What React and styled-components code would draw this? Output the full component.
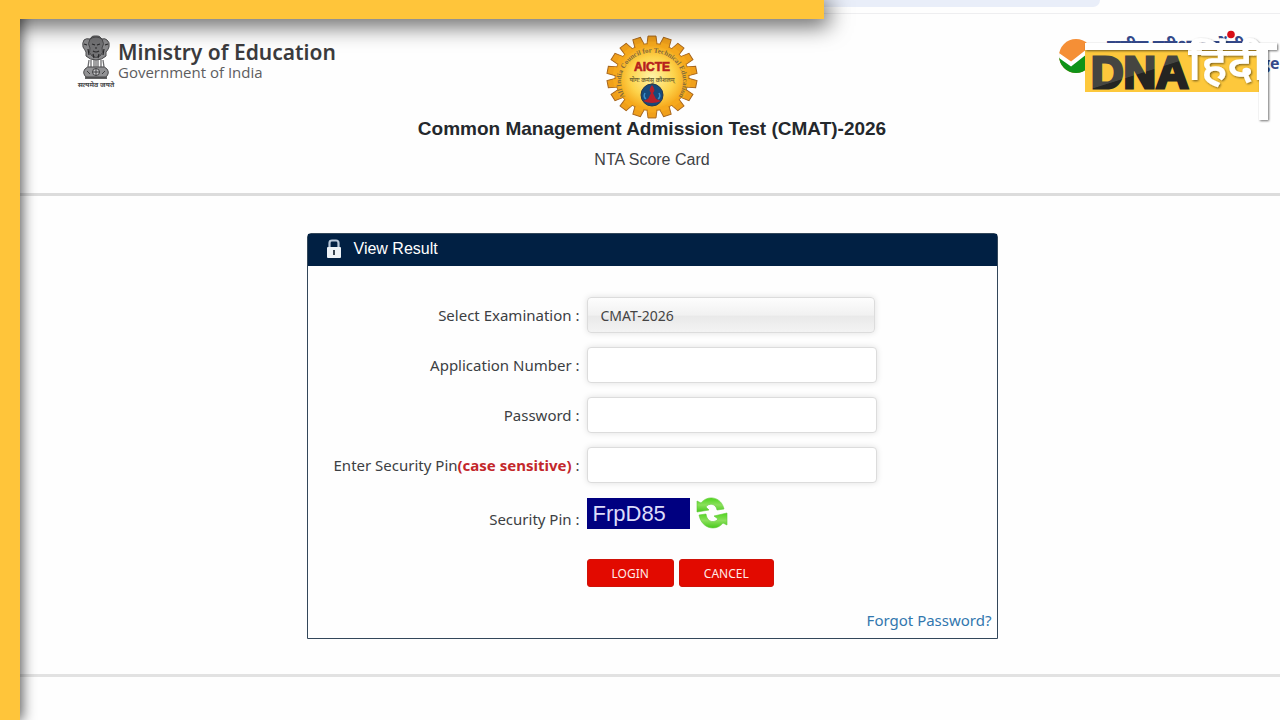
import React, { useState } from 'react';
import styled, { createGlobalStyle } from 'styled-components';

const GlobalStyle = createGlobalStyle`
  * {
    box-sizing: border-box;
  }

  body {
    margin: 0;
    background: #fefefe;
    color: #3c4043;
    font-family: 'Noto Sans', 'Open Sans', sans-serif;
    font-size: 15px;
    overflow-x: hidden;
  }
`;

const Page = styled.div`
  position: relative;
  min-height: 100vh;
  padding-left: 20px;
  overflow: hidden;
`;

/* yellow promo frame that lies over the page */
const FrameTop = styled.div`
  position: absolute;
  top: 0;
  left: 0;
  width: 824px;
  max-width: 100%;
  height: 19px;
  background: #ffc53a;
  box-shadow: 2px 4px 22px 3px rgba(0, 0, 0, 0.62);
`;

const FrameLeft = styled.div`
  position: absolute;
  top: 0;
  bottom: 0;
  left: 0;
  width: 20px;
  background: #ffc53a;
  box-shadow: 1px 0 14px 1px rgba(0, 0, 0, 0.68);
`;

const FrameCorner = styled.div`
  position: absolute;
  top: 0;
  left: 0;
  width: 60px;
  height: 19px;
  background: #ffc53a;
`;

const BrowserStrip = styled.div`
  height: 14px;
  padding-right: 180px;
  border-bottom: 1px solid #eeeef0;
`;

const AddressPill = styled.div`
  height: 7px;
  background: #e9eef9;
  border-radius: 0 0 14px 14px;
`;

const Header = styled.header`
  display: grid;
  grid-template-columns: 1fr auto 1fr;
  align-items: start;
  padding: 21px 0 22px 4px;
  border-bottom: 3px solid #dcdcdc;
`;

const Ministry = styled.div`
  display: flex;
  gap: 3px;
  padding-left: 53px;
`;

const MinistryText = styled.div`
  padding-top: 5px;
`;

const MinistryName = styled.div`
  color: #3b3b3d;
  font-size: 21px;
  font-weight: 600;
  line-height: 24px;
  white-space: nowrap;
`;

const MinistryGov = styled.div`
  color: #5d5d5f;
  font-family: 'Open Sans', sans-serif;
  font-size: 15px;
  line-height: 16px;
`;

const Center = styled.div`
  display: flex;
  flex-direction: column;
  align-items: center;
`;

const Title = styled.h1`
  margin: 0;
  color: #24282c;
  font-family: 'Liberation Sans', Arial, sans-serif;
  font-size: 19px;
  font-weight: 700;
  line-height: 20px;
  white-space: nowrap;
`;

const SubTitle = styled.h2`
  margin: 10px 0 0;
  color: #3f4245;
  font-family: 'Liberation Sans', Arial, sans-serif;
  font-size: 16px;
  font-weight: 400;
  line-height: 22px;
`;

const Brand = styled.div`
  position: absolute;
  top: 14px;
  right: 0;
`;

const Main = styled.main`
  padding: 37px 0 35px 4px;
  border-bottom: 3px solid #e2e2e2;
`;

const Panel = styled.section`
  width: 55%;
  min-width: 691px;
  margin: 0 auto;
  border: 1px solid #33475a;
  border-radius: 4px 4px 0 0;
`;

const PanelHead = styled.div`
  display: flex;
  align-items: center;
  gap: 12px;
  height: 32px;
  padding: 0 18px 2px;
  background: #012043;
  color: #fff;
  font-family: 'Liberation Sans', Arial, sans-serif;
  font-size: 16px;
`;

const Form = styled.form`
  display: grid;
  gap: 14px;
  padding: 31px 0 0;
`;

const Row = styled.div`
  display: grid;
  grid-template-columns: 272px 1fr;
  align-items: ${(p) => p.$align || 'center'};
  gap: 7px;
`;

const Label = styled.label`
  line-height: 20px;
  text-align: right;
  white-space: nowrap;

  b {
    color: #c3272b;
  }
`;

const fieldLook = `
  height: 36px;
  border: 1px solid #dcdcdc;
  border-radius: 4px;
  box-shadow: 0 0 6px rgba(0, 0, 0, 0.12);
  padding: 0 13px;
  color: #444;
  font-family: 'Noto Sans', sans-serif;
  font-size: 14px;
`;

const Field = styled.input`
  ${fieldLook}
  width: 290px;
  background: #fff;
`;

const Select = styled.select`
  ${fieldLook}
  width: 288px;
  appearance: none;
  background: linear-gradient(#fdfdfd 0%, #f1f1f1 50%, #e9e9e9 54%, #f3f3f3 100%);
`;

const Captcha = styled.div`
  display: flex;
  align-items: center;
  gap: 6px;
`;

const CaptchaCode = styled.output`
  width: 103px;
  height: 31px;
  padding-left: 6px;
  background: #000080;
  color: #dcdcfa;
  font-family: 'Liberation Sans', Arial, sans-serif;
  font-size: 22px;
  line-height: 31px;
`;

const IconButton = styled.button`
  display: flex;
  padding: 0;
  border: 0;
  background: none;
  cursor: pointer;
`;

const Actions = styled.div`
  display: flex;
  gap: 5px;
  padding: 16px 0 0 279px;
`;

const Button = styled.button`
  height: 28px;
  padding: 0 24px;
  border: 1px solid #d01208;
  border-radius: 3px;
  background: #e20a00;
  color: #ffe9e6;
  font-family: 'Noto Sans', sans-serif;
  font-size: 12px;
  cursor: pointer;
`;

const Forgot = styled.div`
  padding: 22px 5px 7px 0;
  line-height: 22px;
  text-align: right;

  a {
    color: #3277ae;
    text-decoration: none;
  }
`;

const Emblem = () => (
  <svg width="38" height="56" viewBox="0 0 38 56" aria-hidden="true">
    <g stroke="#4a4a4c" strokeWidth="1">
      <path d="M7 5 Q5 8 6 12 Q8 15 9 17 L9 21 Q13 25 19 25 Q25 25 29 21 L29 17 Q31 15 32 12 Q33 7 30 5 Q28 3 25 4 Q22 0 19 1 Q15 0 13 4 Q9 3 7 5Z" fill="#8b8b8d" />
      <path d="M13 4 Q10 9 13 13 Q11 18 15 21 Q19 24 23 21 Q27 18 25 13 Q28 9 25 4 Q19 0 13 4Z" fill="#737375" />
    </g>
    <path d="M15 9 L18 10 M20 10 L23 9 M18 13 H20 M16 16 Q19 18 22 16 M7 9 L10 10 M28 10 L31 9 M11 14 L12 20 M27 14 L26 20 M16 19 L17 23 M21 23 L22 19" stroke="#29292b" strokeWidth="1.2" fill="none" />
    <path d="M12 25 L11 32 M14 25 L14 33 M17 25 V33 M19 25 V34 M21 25 V33 M24 25 L24 33 M26 25 L27 32" stroke="#6c6c6e" strokeWidth="1.3" />
    <path d="M8 34 Q10 31 15 32 L23 32 Q28 31 30 34 Q33 38 29 42 L9 42 Q5 38 8 34Z" fill="#929294" stroke="#48484a" />
    <circle cx="19" cy="37" r="3.5" fill="#c8c8ca" stroke="#3d3d3f" />
    <path d="M19 34 V40 M16 37 H22 M10 36 L13 39 M25 39 L28 36" stroke="#404042" />
    <path d="M8 43 H30" stroke="#3b3b3d" strokeWidth="1.6" />
    <text x="19" y="52" textAnchor="middle" fontFamily="'Noto Sans', 'Noto Sans Devanagari', sans-serif" fontSize="7" fontWeight="700" fill="#48484a">सत्यमेव जयते</text>
  </svg>
);

const teeth = Array.from({ length: 18 }, (_, i) => i * 20);

const AicteLogo = () => (
  <svg width="92" height="84" viewBox="0 0 92 84" role="img" aria-label="AICTE">
    <defs>
      <radialGradient id="gear">
        <stop offset="0" stopColor="#fff3a8" />
        <stop offset="0.6" stopColor="#fdd34b" />
        <stop offset="1" stopColor="#f5a315" />
      </radialGradient>
      <path id="arc" d="M20.500 63 A31 29 0 1 1 71.500 63" />
    </defs>
    <g transform="translate(46 42) scale(1 0.91)">
      {teeth.map((a) => (
        <path key={a} d="M-5 -36 L-4 -45 H4 L5 -36Z" transform={`rotate(${a})`} fill="#f0a01b" stroke="#a7651c" />
      ))}
      <circle r="37" fill="url(#gear)" stroke="#b77720" />
      {teeth.map((a) => (
        <path key={a} d="M-4.200 -34 V-39 H4.200 V-34Z" transform={`rotate(${a})`} fill="#f6a91d" />
      ))}
    </g>
    <text fontFamily="'Liberation Serif', serif" fontSize="7" fontWeight="700" fill="#82693a">
      <textPath href="#arc" startOffset="50%" textAnchor="middle">All India Council for Technical Education</textPath>
    </text>
    <text x="46" y="36" textAnchor="middle" fontFamily="'Liberation Sans', sans-serif" fontSize="12" fontWeight="700" fill="#b5201c" stroke="#b5201c" strokeWidth="0.6">AICTE</text>
    <text x="46" y="47" textAnchor="middle" fontFamily="'Noto Sans', sans-serif" fontSize="6" fontWeight="600" fill="#6f642f">योगः कर्मसु कौशलम्</text>
    <circle cx="46" cy="60" r="11" fill="#164a7c" stroke="#26384e" />
    <path d="M46 50 Q42 55 45 58 L42 64 L37 66 Q46 70 55 66 L50 64 L47 58 Q50 55 46 50Z" fill="#b5202a" />
    <path d="M39 58 Q37 62 40 64 M53 58 Q55 62 52 64" stroke="#3c8ec9" strokeWidth="1.5" fill="none" />
  </svg>
);

const deva = "'Noto Sans', 'Noto Sans Devanagari', sans-serif";

const DnaLogo = () => (
  <svg width="224" height="116" viewBox="1056 14 224 116" role="img" aria-label="DNA हिंदी">
    <defs>
      <clipPath id="leaf">
        <ellipse cx="1076" cy="56" rx="17" ry="17" />
      </clipPath>
      <linearGradient id="ink" gradientUnits="userSpaceOnUse" x1="1130" y1="52" x2="1142" y2="90">
        <stop offset="0.58" stopColor="#454541" />
        <stop offset="0.6" stopColor="#242422" />
      </linearGradient>
      <filter id="lift" x="-10%" y="-10%" width="120%" height="130%">
        <feDropShadow dx="1" dy="1" stdDeviation="1.2" floodOpacity="0.55" />
      </filter>
    </defs>
    <text x="1107" y="52" fontFamily={deva} fontSize="18" fontWeight="700" fill="#34498a">राष्ट्रीय परीक्षा एजेंसी</text>
    <text x="1261" y="69" fontFamily="'Open Sans', sans-serif" fontSize="16" fontWeight="700" fill="#34498a">ge</text>
    <g clipPath="url(#leaf)">
      <rect x="1058" y="38" width="40" height="36" fill="#f58f36" />
      <path d="M1056 55 L1071 64 L1094 46 V76 H1056Z" fill="#0f9318" />
      <path d="M1057 54 L1071 64 L1094 46" stroke="#fff" strokeWidth="4" fill="none" />
    </g>
    <rect x="1085" y="50" width="174" height="42" fill="#fdc83c" />
    <text x="1091" y="88" fontFamily="'Liberation Sans', Arial, sans-serif" fontSize="45" fontWeight="700" fill="url(#ink)" stroke="url(#ink)" strokeWidth="3">DNA</text>
    <g filter="url(#lift)" fill="#fff">
      <rect x="1085" y="43" width="192" height="7" />
      <rect x="1259" y="44" width="9" height="76" />
      <text x="1188" y="80" fontFamily={deva} fontSize="47" fontWeight="600">हिंदी</text>
    </g>
    <circle cx="1231" cy="34.500" r="3.800" fill="#d80d17" />
  </svg>
);

const LockIcon = () => (
  <svg width="16" height="20" viewBox="0 0 16 20" aria-hidden="true">
    <path d="M3.500 9 V4 Q3.500 1.500 6 1.500 H10 Q12.500 1.500 12.500 4 V9" stroke="#b9c8da" strokeWidth="2.200" fill="none" />
    <rect x="1" y="8" width="14" height="11" rx="1" fill="#eef3f8" />
    <path d="M8 11 V16" stroke="#3a4652" strokeWidth="2" />
  </svg>
);

const RefreshIcon = () => (
  <svg width="32" height="32" viewBox="0 0 32 32" aria-hidden="true">
    <defs>
      <linearGradient id="leafGreen" x1="0" y1="0" x2="0" y2="1">
        <stop offset="0" stopColor="#4fd41e" />
        <stop offset="0.5" stopColor="#8be05c" />
        <stop offset="1" stopColor="#48c91c" />
      </linearGradient>
    </defs>
    <g fill="url(#leafGreen)" stroke="#5fc936" strokeWidth="0.6">
      <path d="M1 4 L5 6 C11 -2 25 -1 28 12 L21 13 C20 6 12 6 10 10 L13 13 L1 15Z" />
      <path d="M31 28 L27 26 C21 34 6 33 3 18 L10 17 C11 26 19 26 22 22 L18 19 L31 16Z" />
    </g>
  </svg>
);

const fields = [
  { id: 'appNo', label: 'Application Number :', type: 'text' },
  { id: 'password', label: 'Password :', type: 'password' },
  { id: 'pin', label: 'Enter Security Pin', note: '(case sensitive)', type: 'text' },
];

const App = () => {
  const [values, setValues] = useState({ appNo: '', password: '', pin: '' });

  const handleChange = (e) => setValues({ ...values, [e.target.id]: e.target.value });

  return (
    <Page>
      <GlobalStyle />
      <BrowserStrip>
        <AddressPill />
      </BrowserStrip>

      <Header>
        <Ministry>
          <Emblem />
          <MinistryText>
            <MinistryName>Ministry of Education</MinistryName>
            <MinistryGov>Government of India</MinistryGov>
          </MinistryText>
        </Ministry>
        <Center>
          <AicteLogo />
          <Title>Common Management Admission Test (CMAT)-2026</Title>
          <SubTitle>NTA Score Card</SubTitle>
        </Center>
      </Header>

      <Main>
        <Panel>
          <PanelHead>
            <LockIcon />
            View Result
          </PanelHead>
          <Form onSubmit={(e) => e.preventDefault()}>
            <Row>
              <Label htmlFor="exam">Select Examination :</Label>
              <Select id="exam">
                <option>CMAT-2026</option>
              </Select>
            </Row>
            {fields.map((f) => (
              <Row key={f.id}>
                <Label htmlFor={f.id}>
                  {f.label}
                  {f.note && <><b>{f.note}</b> :</>}
                </Label>
                <Field id={f.id} type={f.type} value={values[f.id]} onChange={handleChange} />
              </Row>
            ))}
            <Row $align="end">
              <Label htmlFor="captcha">Security Pin :</Label>
              <Captcha>
                <CaptchaCode id="captcha">FrpD85</CaptchaCode>
                <IconButton type="button" aria-label="Refresh security pin">
                  <RefreshIcon />
                </IconButton>
              </Captcha>
            </Row>
            <Actions>
              <Button type="submit">LOGIN</Button>
              <Button type="reset">CANCEL</Button>
            </Actions>
          </Form>
          <Forgot>
            <a href="#forgot">Forgot Password?</a>
          </Forgot>
        </Panel>
      </Main>

      <FrameTop />
      <FrameLeft />
      <FrameCorner />
      <Brand>
        <DnaLogo />
      </Brand>
    </Page>
  );
};

export default App;
